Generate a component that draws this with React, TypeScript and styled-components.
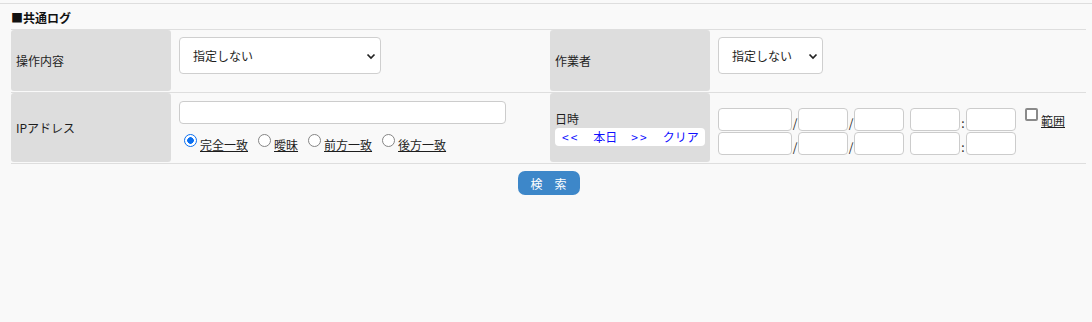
import React from "react";
import styled, { createGlobalStyle } from "styled-components";

const GlobalStyle = createGlobalStyle`
  html, body {
    margin: 0;
    padding: 0;
    background: #f9f9f9;
  }
  body {
    font-family: "Noto Sans CJK JP", "Noto Sans", sans-serif;
    font-size: 12px;
    color: #1e1e1e;
  }
`;

const Page = styled.div`
  min-height: 322px;
  padding-top: 3px;
  box-sizing: border-box;
`;

const TopRule = styled.div`
  border-top: 1px solid #dedede;
`;

const SectionTitle = styled.h2`
  margin: 0;
  padding: 6px 0 3px 11px;
  font-size: 12px;
  line-height: 16px;
  font-weight: bold;
  color: #111;
`;

const Table = styled.div`
  margin: 0 6px 0 11px;
  border-bottom: 1px solid #dedede;
`;

const Row = styled.div<{ $height: number }>`
  display: grid;
  grid-template-columns: 160px 379px 160px 1fr;
  grid-template-rows: ${(p) => p.$height}px;
  border-top: 1px solid #dedede;
  padding-bottom: 1px;
`;

const HeadCell = styled.div`
  background: #dddddd;
  border-radius: 3px;
  padding: 0 5px;
  display: flex;
  flex-direction: column;
  justify-content: center;
  line-height: 18px;
`;

const ValueCell = styled.div<{ $top: number }>`
  padding: ${(p) => p.$top}px 8px 0;
`;

const SelectWrap = styled.div<{ $width: number }>`
  position: relative;
  width: ${(p) => p.$width}px;
  height: 37px;
`;

const Select = styled.select`
  appearance: none;
  width: 100%;
  height: 100%;
  box-sizing: border-box;
  border: 1px solid #cfcfcf;
  border-radius: 4px;
  background: #fff;
  padding: 0 0 0 13px;
  font-family: inherit;
  font-size: 12px;
  color: #1e1e1e;
`;

const Chevron = styled.svg`
  position: absolute;
  right: 5px;
  top: 16px;
  pointer-events: none;
`;

const TextInput = styled.input<{ $width: number }>`
  width: ${(p) => p.$width}px;
  height: 23px;
  box-sizing: border-box;
  border: 1px solid #cccccc;
  border-radius: 4px;
  background: #fff;
  margin: 0;
  padding: 0 4px;
  font-family: inherit;
  font-size: 12px;
`;

const RadioGroup = styled.div`
  display: flex;
  margin-top: 10px;
`;

const RadioOption = styled.label`
  display: flex;
  align-items: flex-start;
  margin-right: 5px;
`;

const Radio = styled.input`
  appearance: none;
  box-sizing: border-box;
  width: 13px;
  height: 13px;
  margin: 0 3px 0 5px;
  border: 1.5px solid #858585;
  border-radius: 50%;
  background: #fff;

  &:checked {
    border-color: #0b6ff0;
    background: radial-gradient(circle, #0b6ff0 0 3px, #fff 3.6px);
  }
`;

const Underlined = styled.span`
  text-decoration: underline;
  line-height: 16px;
  margin-top: 3px;
`;

const DateNav = styled.div`
  background: #fff;
  border-radius: 4px;
  height: 18px;
  display: flex;
  align-items: center;
  gap: 14px;
  padding-left: 7px;
`;

const NavLink = styled.a<{ $arrow?: boolean }>`
  color: #1010ff;
  text-decoration: none;
  letter-spacing: ${(p) => (p.$arrow ? "2px" : "0")};
  cursor: pointer;
`;

const DateBlock = styled.div`
  display: flex;
  align-items: flex-start;
`;

const DateRows = styled.div`
  display: flex;
  flex-direction: column;
  gap: 1px;
`;

const DateRow = styled.div`
  display: flex;
  align-items: flex-end;
`;

const Sep = styled.span`
  width: 6px;
  text-align: center;
  line-height: 14px;
  padding-bottom: 1px;
`;

const RangeLabel = styled.label`
  display: flex;
  align-items: flex-start;
  margin-left: 5px;
`;

const Checkbox = styled.input`
  appearance: none;
  box-sizing: border-box;
  width: 13px;
  height: 13px;
  margin: 0 3px 0 4px;
  border: 2px solid #8a8a8a;
  border-radius: 2px;
  background: #fff;
`;

const RangeText = styled(Underlined)`
  margin-top: 5px;
`;

const ButtonBar = styled.div`
  margin: 0 6px 0 11px;
  padding-top: 7px;
  display: flex;
  justify-content: center;
`;

const SearchButton = styled.button`
  width: 62px;
  height: 24px;
  padding: 0;
  border: none;
  border-radius: 7px;
  background: #3d87c9;
  color: #fff;
  font-family: inherit;
  font-size: 12px;
  cursor: pointer;
`;

const ChevronIcon = () => (
  <Chevron width="10" height="7" viewBox="0 0 10 7">
    <path d="M1.5 1.5 L5 5 L8.5 1.5" fill="none" stroke="#222" strokeWidth="1.7" />
  </Chevron>
);

const DateLine = () => (
  <DateRow>
    <TextInput $width={74} />
    <Sep>/</Sep>
    <TextInput $width={50} />
    <Sep>/</Sep>
    <TextInput $width={50} />
    <Sep> </Sep>
    <TextInput $width={50} />
    <Sep>:</Sep>
    <TextInput $width={50} />
  </DateRow>
);

const matchOptions = ["完全一致", "曖昧", "前方一致", "後方一致"];

const App: React.FunctionComponent = () => {
  return (
    <Page>
      <GlobalStyle />
      <TopRule />
      <SectionTitle>■共通ログ</SectionTitle>
      <Table>
        <Row $height={61}>
          <HeadCell>操作内容</HeadCell>
          <ValueCell $top={7}>
            <SelectWrap $width={202}>
              <Select defaultValue="">
                <option value="">指定しない</option>
              </Select>
              <ChevronIcon />
            </SelectWrap>
          </ValueCell>
          <HeadCell>作業者</HeadCell>
          <ValueCell $top={7}>
            <SelectWrap $width={105}>
              <Select defaultValue="">
                <option value="">指定しない</option>
              </Select>
              <ChevronIcon />
            </SelectWrap>
          </ValueCell>
        </Row>
        <Row $height={69}>
          <HeadCell>IPアドレス</HeadCell>
          <ValueCell $top={8}>
            <TextInput $width={327} />
            <RadioGroup>
              {matchOptions.map((label, i) => (
                <RadioOption key={label}>
                  <Radio type="radio" name="ipmatch" defaultChecked={i === 0} />
                  <Underlined>{label}</Underlined>
                </RadioOption>
              ))}
            </RadioGroup>
          </ValueCell>
          <HeadCell>
            <div>日時</div>
            <DateNav>
              <NavLink $arrow>&lt;&lt;</NavLink>
              <NavLink>本日</NavLink>
              <NavLink $arrow>&gt;&gt;</NavLink>
              <NavLink>クリア</NavLink>
            </DateNav>
          </HeadCell>
          <ValueCell $top={15}>
            <DateBlock>
              <DateRows>
                <DateLine />
                <DateLine />
              </DateRows>
              <RangeLabel>
                <Checkbox type="checkbox" />
                <RangeText>範囲</RangeText>
              </RangeLabel>
            </DateBlock>
          </ValueCell>
        </Row>
      </Table>
      <ButtonBar>
        <SearchButton>検　索</SearchButton>
      </ButtonBar>
    </Page>
  );
};

export default App;
